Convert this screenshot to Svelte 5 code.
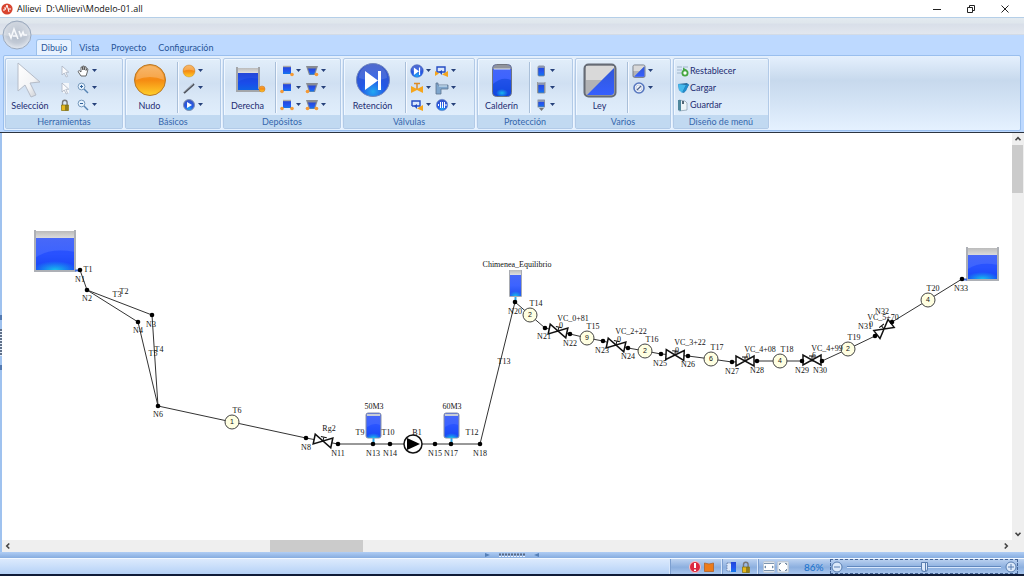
<script>
  const tabs = ['Dibujo', 'Vista', 'Proyecto', 'Configuración'];

  const groups = [
    { title: 'Herramientas', size: 'medium', big: { icon: 'cursor', label: 'Selección' }, plain: true,
      cols: [
        { arrows: false, items: [['cursorSmall', 'Puntero'], ['cursorMulti', 'Selección múltiple'], ['lock', 'Bloquear']] },
        { arrows: true, items: [['hand', 'Mover'], ['zoomIn', 'Ampliar'], ['zoomOut', 'Reducir']] }
      ] },
    { title: 'Básicos', size: 'small', big: { icon: 'ball', label: 'Nudo' },
      cols: [{ arrows: true, items: [['ball', 'Nudo'], ['pipe', 'Tubería'], ['play', 'Bomba']] }] },
    { title: 'Depósitos', size: 'medium', big: { icon: 'tankRight', label: 'Derecha' },
      cols: [
        { arrows: true, items: [['tankR', 'Depósito derecha'], ['tankL', 'Depósito izquierda'], ['tankB', 'Depósito doble']] },
        { arrows: true, items: [['coneR', 'Tolva derecha'], ['coneL', 'Tolva izquierda'], ['coneB', 'Tolva doble']] }
      ] },
    { title: 'Válvulas', size: 'large', big: { icon: 'check', label: 'Retención' },
      cols: [
        { arrows: true, items: [['check', 'Retención'], ['valve', 'Válvula'], ['bypass', 'Baipás']] },
        { arrows: true, items: [['bypass2', 'Baipás doble'], ['elbow', 'Codo'], ['wave', 'Ventosa']] }
      ] },
    { title: 'Protección', size: 'small', big: { icon: 'vessel', label: 'Calderín' },
      cols: [{ arrows: true, items: [['vesselS', 'Calderín'], ['chimney', 'Chimenea'], ['oneway', 'Unidireccional']] }] },
    { title: 'Varios', size: 'small', big: { icon: 'law', label: 'Ley' },
      cols: [{ arrows: true, items: [['law', 'Ley'], ['gauge', 'Medidor']] }] }
  ];

  const menuActions = [['reset', 'Restablecer'], ['load', 'Cargar'], ['save', 'Guardar']];

  const pipes = [
    '80,270 87,290', '87,290 152,315 158,406', '87,290 138,322 158,406',
    '158,406 306,438 338,444 389,444 480,444 515,302', '515,302 530,315 545,328 570,334 587,338 603,341 628,348 645,351 661,354 688,356 711,359 732,362 757,361 802,361 822,361 848,349 875,336 892,322 928,300 962,279'
  ];

  const nodes = [
    ['N1', 80, 270, 80, 279], ['N2', 87, 290, 87, 298], ['N3', 152, 315, 151, 324], ['N4', 138, 322, 138, 330],
    ['N6', 158, 406, 158, 414], ['N8', 306, 438, 306, 447], ['N11', 338, 444, 338, 453], ['N13', 373, 444, 373, 453],
    ['N14', 390, 444, 390, 453], ['N15', 435, 444, 435, 453], ['N17', 451, 444, 451, 453], ['N18', 480, 444, 480, 453],
    ['N20', 515, 302, 515, 311], ['N21', 545, 328, 544, 336], ['N22', 570, 334, 570, 343], ['N23', 603, 341, 602, 350],
    ['N24', 628, 348, 628, 356], ['N25', 661, 354, 660, 363], ['N26', 688, 356, 688, 364], ['N27', 732, 362, 732, 371],
    ['N28', 757, 361, 757, 370], ['N29', 802, 361, 802, 370], ['N30', 822, 361, 820, 370], ['N31', 875, 336, 865, 326],
    ['N32', 892, 322, 882, 311], ['N33', 962, 279, 961, 288]
  ];

  const labels = [
    ['T1', 88, 269], ['T2', 124, 291], ['T3', 117, 294], ['T4', 159, 349], ['T5', 153, 353], ['T6', 237, 410],
    ['Rg2', 329, 428], ['T9', 360, 432], ['T10', 388, 432], ['B1', 417, 432], ['T12', 472, 432],
    ['50M3', 374, 406], ['60M3', 452, 406], ['Chimenea_Equilibrio', 517, 264], ['T13', 504, 361], ['T14', 536, 303],
    ['VC_0+81', 573, 318], ['0', 561, 325], ['T15', 593, 326], ['VC_2+22', 631, 331], ['0', 619, 339], ['T16', 652, 339],
    ['VC_3+22', 690, 342], ['0', 677, 350], ['T17', 717, 347], ['VC_4+08', 760, 349], ['0', 748, 356], ['T18', 787, 349],
    ['VC_4+99', 827, 348], ['6', 814, 355], ['T19', 854, 337], ['VC_5+70', 883, 317], ['0', 871, 324], ['T20', 933, 288]
  ];

  const stations = [
    ['1', 232, 422], ['2', 530, 315], ['9', 587, 338], ['2', 645, 351], ['6', 711, 359], ['4', 780, 361], ['2', 848, 349], ['4', 928, 300]
  ];

  const valves = [
    [323, 441, 12], [558, 331, 12], [616, 345, 12], [675, 355, 3], [745, 361, 0], [812, 360, 0], [884, 329, -38]
  ];

  let zoom = $state(86);
  let active = $state('Dibujo');
</script>

{#snippet icon(name)}
  {#if name === 'cursor'}
    <svg class="pic" viewBox="0 0 36 36"><path d="M6 1v28l7-6 6 12 5-2-6-12 10-1z" fill="url(#gWhite)" stroke="#b5bcc8" /></svg>
  {:else if name === 'cursorSmall' || name === 'cursorMulti'}
    <svg class="pic" viewBox="0 0 14 14">
      {#if name === 'cursorMulti'}<path d="M5 2h6v10H5z" fill="#f3f6fa" />{/if}
      <path d="M4 2v9l2.200-2 2 4 1.400-.6-1.800-4 3-.2z" fill="#fafbfd" stroke="#a9b3c1" stroke-width=".8" />
    </svg>
  {:else if name === 'lock'}
    <svg class="pic" viewBox="0 0 14 14"><path d="M4.500 8V4.500a2.300 2.300 0 0 1 4.600 0V8" fill="none" stroke="#777" stroke-width="1.400" /><path d="M3.500 7h7v5.500h-7z" fill="#e8b81c" stroke="#81710d" stroke-width=".7" /><path d="M7 7h3v5.500H7z" fill="#66611d" opacity=".65" /></svg>
  {:else if name === 'hand'}
    <svg class="pic" viewBox="0 0 14 14"><path d="M5 12 2 7.500l1.200-1L5 8V3.200l1.300-.3.500 3V2l1.400.1V6l.7-3.400 1.300.4-.2 3.500.9-2 1.100.7L11 9l-1 3z" fill="#fff" stroke="#444" stroke-width=".8" /></svg>
  {:else if name === 'zoomIn' || name === 'zoomOut'}
    <svg class="pic" viewBox="0 0 14 14"><path d="m8 8 4 4" stroke="#5784b4" stroke-width="1.500" /><circle cx="5.500" cy="5.500" r="3.400" fill="#e6f2fd" stroke="#7598bc" /><path d="M4 5.500h3" stroke="#31629b" />{#if name === 'zoomIn'}<path d="M5.500 4v3" stroke="#31629b" />{/if}</svg>
  {:else if name === 'ball'}
    <svg class="pic" viewBox="0 0 36 36"><circle cx="18" cy="18" r="15.500" fill="url(#gOrange)" stroke="#b87928" /><path d="M4 18a14 14 0 0 1 28 0q-14-6-28 0" fill="#fff" opacity=".22" /></svg>
  {:else if name === 'pipe'}
    <svg class="pic" viewBox="0 0 14 14"><path d="M2 12 12 3" stroke="#4e535d" stroke-width="2" /><path d="m2 11 9-8" stroke="#bac2ca" stroke-width=".7" /></svg>
  {:else if name === 'play'}
    <svg class="pic" viewBox="0 0 14 14"><circle cx="7" cy="7" r="5.500" fill="url(#gDisc)" stroke="#8191af" /><path d="M5 4v6l5-3z" fill="#fff" /></svg>
  {:else if name === 'tankRight'}
    <svg class="pic" viewBox="0 0 36 36"><path d="M8 6h21v5H8z" fill="url(#gGrey)" /><path d="M8 11h21v17H8z" fill="url(#gWater)" /><path d="M8 20q9-6 21-3v11H8z" fill="#0a38e0" opacity=".35" /><path d="M7 5v24h24" fill="none" stroke="#a3a6aa" stroke-width="2" /><path d="M29 5v22" stroke="#a3a6aa" stroke-width="2" /><circle cx="32" cy="27" r="3" fill="url(#gOrange)" stroke="#cf8330" stroke-width=".6" /></svg>
  {:else if name.startsWith('tank')}
    <svg class="pic" viewBox="0 0 14 14"><path d="M3 3h8v7H3z" fill="url(#gWater)" /><path d="M3 2.500h8" stroke="#aaa" stroke-width="1.400" />
      {#if name !== 'tankL'}<circle cx="12" cy="10.500" r="1.800" fill="#f59a35" />{/if}
      {#if name !== 'tankR'}<circle cx="2" cy="10.500" r="1.800" fill="#f59a35" />{/if}</svg>
  {:else if name.startsWith('cone')}
    <svg class="pic" viewBox="0 0 14 14"><path d="M1 2h12l-3 9H4z" fill="#878b93" /><path d="M3 4.500h8L9 10.500H5z" fill="url(#gWater)" />
      {#if name !== 'coneL'}<circle cx="11.500" cy="10.500" r="1.800" fill="#f59a35" />{/if}
      {#if name !== 'coneR'}<circle cx="2.500" cy="10.500" r="1.800" fill="#f59a35" />{/if}</svg>
  {:else if name === 'check'}
    <svg class="pic" viewBox="0 0 36 36"><circle cx="18" cy="18" r="16.500" fill="url(#gDisc)" stroke="#7188bf" /><path d="M4 16a14 14 0 0 1 28 0q-14 5-28 0" fill="#fff" opacity=".12" /><path d="M10 9v19l13-9.500zM23 9h3v19h-3z" fill="#fff" /></svg>
  {:else if name === 'valve'}
    <svg class="pic" viewBox="0 0 14 14"><path d="M1 5v7l6-3 6 3V5L7 8z" fill="#f5a51c" /><path d="M7 8V3M4 2.500h6" stroke="#dd8b23" stroke-width="1.500" /></svg>
  {:else if name === 'bypass' || name === 'bypass2'}
    <svg class="pic" viewBox="0 0 14 14"><path d="M2 8V3h8v5H2" fill="#dce8fb" stroke="#244cc3" stroke-width="1.400" /><path d="M4 8 7 11V6z" fill="#244cc3" /><path d="M7 10.500 13 7v6z" fill="#f5a51c" />{#if name === 'bypass2'}<path d="M0 7v5l4-2.500z" fill="#f5a51c" />{/if}</svg>
  {:else if name === 'elbow'}
    <svg class="pic" viewBox="0 0 14 14"><path d="M1 2h2v2h10v4H6v5H1z" fill="#7fa6cc" stroke="#5d7490" stroke-width=".8" /><path d="M4 5h8" stroke="#dcecf7" /></svg>
  {:else if name === 'wave'}
    <svg class="pic" viewBox="0 0 14 14"><circle cx="7" cy="7" r="5.700" fill="url(#gDisc)" stroke="#718bc4" stroke-width=".6" /><path d="M3.500 6v2M5.500 4v6M7.500 4v6M9.500 4v6M11 6v2" stroke="#fff" /></svg>
  {:else if name === 'vessel'}
    <svg class="pic" viewBox="0 0 36 36"><rect x="8.500" y="2.500" width="19" height="32" rx="4" fill="url(#gTank)" stroke="#70757f" /><path d="M9 7q0-4 4-4h10q4 0 4 4z" fill="#90949c" /><path d="M10 7h16" stroke="#dce2ec" /><path d="M9 22q9-8 18-4v12q0 4-4 4H13q-4 0-4-4z" fill="#003ccd" opacity=".45" /><ellipse cx="18" cy="31" rx="6" ry="4" fill="url(#gGlow)" /></svg>
  {:else if name === 'vesselS' || name === 'chimney' || name === 'oneway'}
    <svg class="pic" viewBox="0 0 14 14"><rect x="4" y="2" width="6.500" height={name === 'oneway' ? 7 : 10} rx={name === 'vesselS' ? 1 : 0} fill="url(#gWater)" stroke="#777f8f" stroke-width=".8" /><path d="M4 3h6.500" stroke="#a5a8ad" stroke-width="1.500" />
      {#if name === 'chimney'}<path d="M3.500 1v11M11 1v11" stroke="#999" />{/if}
      {#if name === 'oneway'}<path d="M5 10h5l-2.500 3z" fill="#777" />{/if}</svg>
  {:else if name === 'law'}
    <svg class="pic" viewBox="0 0 36 36"><rect x="2.500" y="2.500" width="31" height="32" rx="4" fill="#b2b3b5" stroke="#656b75" stroke-width="2" /><path d="M4 4h28v3L20 18H4z" fill="#e6e6e6" opacity=".75" /><path d="M32 6v24q0 3-3 3H5z" fill="url(#gLaw)" /></svg>
  {:else if name === 'gauge'}
    <svg class="pic" viewBox="0 0 14 14"><circle cx="7" cy="7" r="5" fill="#f1f5fb" stroke="#5777bf" stroke-width="1.600" /><path d="m5 9 4-4" stroke="#50648d" stroke-width="1.300" /><circle cx="7" cy="7" r="3" fill="none" stroke="#a4b4d2" stroke-width=".6" /></svg>
  {:else if name === 'reset'}
    <svg class="pic" viewBox="0 0 14 14"><path d="M1 3h5M7 3h5M1 6h5M1 9h5" stroke="#9fb5cc" stroke-width="1.200" /><circle cx="9" cy="9" r="2.600" fill="#fff" stroke="#45a642" stroke-width="1.800" /><path d="M7 3.500 11 6H7z" fill="#45a642" /></svg>
  {:else if name === 'load'}
    <svg class="pic" viewBox="0 0 14 14"><path d="M2 3 11 2l2 2-5 8-5-3z" fill="#266b9e" /><path d="m2 3 8 1-4 8-3-3z" fill="#45b8ec" /><path d="m10 4 3-1-3 7-4 2z" fill="#218ccd" /></svg>
  {:else if name === 'save'}
    <svg class="pic" viewBox="0 0 14 14"><path d="m3 2 6 1 2 2v7l-8 1z" fill="#edf5f8" stroke="#8298a9" stroke-width=".7" /><path d="M2 2h3v11l-3-1z" fill="#4e879d" /><path d="M6 3h2v3H6z" fill="#526777" /></svg>
  {:else if name === 'error'}
    <svg class="pic" viewBox="0 0 14 14"><circle cx="7" cy="7" r="5.500" fill="#dc2840" stroke="#f6c6c8" /><path d="M7 3v5M7 9.500v1.500" stroke="#fff" stroke-width="2" /></svg>
  {:else if name === 'box'}
    <svg class="pic" viewBox="0 0 14 14"><path d="M2.500 3q4.500 2 9 0v8.500h-9z" fill="#ed7b1a" stroke="#b36124" stroke-width=".8" /></svg>
  {:else if name === 'copy'}
    <svg class="pic" viewBox="0 0 14 14"><path d="M2 3h5v8H2z" fill="#dfeafa" stroke="#536c96" stroke-width=".7" stroke-dasharray="1.500 1" /><path d="M6 2h5v10H6z" fill="url(#gWater)" /></svg>
  {:else if name === 'fitWidth' || name === 'fitAll'}
    <svg class="pic" viewBox="0 0 14 14"><rect x="1.500" y="1.500" width="11" height="11" rx="1" fill="#dce4ec" stroke="#bec9d6" />
      {#if name === 'fitWidth'}<path d="M2 4h10v6H2z" fill="#fff" /><path d="m2 7 2-1.500v3zM12 7l-2-1.500v3z" fill="#6a87a6" /><path d="M2 3.500h10M2 10.500h10" stroke="#7c95b0" />
      {:else}<path d="M3 3h8v8H3z" fill="#fff" /><path d="M3.500 5V3.500H5M9 3.500h1.500V5M10.500 9v1.500H9M5 10.500H3.500V9" fill="none" stroke="#7288a2" />{/if}</svg>
  {/if}
{/snippet}

{#snippet tank(x, y, w, h)}
  <g transform="translate({x} {y})">
    <rect x="2" y="1" width={w - 4} height="8" fill="url(#gGrey)" />
    <rect x="2" y="8" width={w - 4} height={h - 9} fill="url(#gTank)" />
    <path d="M2 {h * 0.65} Q{w * 0.4} {h * 0.42} {w - 2} {h * 0.52} V{h - 1} H2z" fill="#0a38ff" opacity=".4" />
    <rect x="2" y={h * 0.6} width={w - 4} height={h * 0.4 - 2} fill="url(#gFloor)" />
    <path d="M1 0v{h - 1}h{w - 2}v-{h - 1}" fill="none" stroke="#adb0b6" stroke-width="2" />
  </g>
{/snippet}

<svg class="defs" width="0" height="0" aria-hidden="true">
  <defs>
    <linearGradient id="gWhite" x2="1" y2="1"><stop stop-color="#fff" /><stop offset=".6" stop-color="#f3f4f6" /><stop offset="1" stop-color="#c3c7cd" /></linearGradient>
    <linearGradient id="gOrange" x2="0" y2="1"><stop stop-color="#f4a546" /><stop offset=".5" stop-color="#f58a12" /><stop offset="1" stop-color="#ffd02a" /></linearGradient>
    <linearGradient id="gGrey" x2="0" y2="1"><stop stop-color="#bbb" /><stop offset="1" stop-color="#e0e0e0" /></linearGradient>
    <linearGradient id="gWater" x2="0" y2="1"><stop stop-color="#2446d8" /><stop offset=".6" stop-color="#2457f0" /><stop offset="1" stop-color="#1379ea" /></linearGradient>
    <linearGradient id="gTank" x2="0" y2="1"><stop stop-color="#4868f8" /><stop offset=".5" stop-color="#3c63ff" /><stop offset="1" stop-color="#1e4eef" /></linearGradient>
    <linearGradient id="gLaw" x2="0" y2="1"><stop stop-color="#3158d8" /><stop offset="1" stop-color="#355fff" /></linearGradient>
    <radialGradient id="gDisc" cx=".5" cy=".85" r=".8"><stop stop-color="#22a8f2" /><stop offset=".45" stop-color="#2458e6" /><stop offset="1" stop-color="#3555c8" /></radialGradient>
    <radialGradient id="gGlow"><stop stop-color="#18b8ee" /><stop offset="1" stop-color="#18b8ee" stop-opacity="0" /></radialGradient>
    <radialGradient id="gFloor" cx=".5" cy="1" r=".6"><stop stop-color="#18c0ec" /><stop offset="1" stop-color="#18b8ee" stop-opacity="0" /></radialGradient>
    <radialGradient id="gOrb" cx=".5" cy=".4" r=".65"><stop stop-color="#a9b4c4" /><stop offset=".6" stop-color="#c2cad6" /><stop offset="1" stop-color="#edf1f7" /></radialGradient>
  </defs>
</svg>

<div class="window">
  <header class="titlebar">
    <svg class="logo" viewBox="0 0 12 12"><circle cx="6" cy="6" r="5.600" fill="#d84530" /><path d="M2 7h2l2-5 2 7M3 5h1M7 6h3" fill="none" stroke="#fff" /></svg>
    <h1>Allievi  D:\Allievi\Modelo-01.all</h1>
    <div class="winbtns">
      <button aria-label="Minimizar"><svg viewBox="0 0 10 10"><path d="M1 5.500h8" /></svg></button>
      <button aria-label="Restaurar"><svg viewBox="0 0 10 10"><path d="M1.500 3.500h5v5h-5zM3.500 3V1.500h5v5H7" /></svg></button>
      <button aria-label="Cerrar"><svg viewBox="0 0 10 10"><path d="m1.500 1.500 7 7m0-7-7 7" /></svg></button>
    </div>
  </header>

  <div class="quick">
    <button class="orb" aria-label="Menú principal">
      <svg viewBox="0 0 30 30"><circle cx="15" cy="15" r="14" fill="url(#gOrb)" stroke="#9aa9bd" /><path d="M2 15a13 13 0 0 1 26 0q-13 4-26 0" fill="#fff" opacity=".25" /><path d="M7 13l2 5 3-9 4 10M11 16h4M17 11l2 5 2-4 1 3h3" fill="none" stroke="#f6f8fb" stroke-width="1.600" /></svg>
    </button>
  </div>

  <nav class="tabs">
    {#each tabs as tab}
      <button class:active={active === tab} onclick={() => (active = tab)}>{tab}</button>
    {/each}
  </nav>

  <div class="ribbon">
    {#each groups as group}
      <section class="group {group.size}">
        <div class="tools">
          <button class="big" class:plain={group.plain}>{@render icon(group.big.icon)}<span>{group.big.label}</span></button>
          {#each group.cols as col}
            <div class="col">
              {#each col.items as [name, label]}
                <button class="mini" aria-label={label}>{@render icon(name)}{#if col.arrows}<i class="caret"></i>{/if}</button>
              {/each}
            </div>
          {/each}
        </div>
        <h2>{group.title}</h2>
      </section>
    {/each}
    <section class="group small">
      <div class="tools">
        <div class="col actions">
          {#each menuActions as [name, label]}
            <button class="mini">{@render icon(name)}<span>{label}</span></button>
          {/each}
        </div>
      </div>
      <h2>Diseño de menú</h2>
    </section>
  </div>

  <main class="work">
    <div class="rail"><i class="stub"></i><i class="grip"></i><i class="stub"></i></div>
    <div class="view">
      <svg class="diagram" role="img" aria-label="Modelo de la conducción">
        <g transform="translate(-2 -133)">
          {@render tank(34, 230, 42, 42)}
          {@render tank(966, 247, 33, 34)}
          <path d="M75 270.500h5M962 279.500h5" stroke="#3c6be0" stroke-width="2" />
          {#each [373, 451] as x}
            <path d="M{x + 0.5} 436v8" stroke="#30a8e8" stroke-width="2" />
            <rect x={x - 7} y="413" width="15" height="25" rx="2" fill="url(#gTank)" stroke="#8c93a5" />
            <path d="M{x - 6} 414h13v2h-13z" fill="#c9ced6" />
            <path d="M{x - 6} 427q7-5 13-2v12h-13z" fill="#0a38ff" opacity=".35" />
            <rect x={x - 6} y="430" width="13" height="8" fill="url(#gFloor)" />
          {/each}
          <path d="M515.500 296v6" stroke="#30a8e8" stroke-width="2" />
          <path d="M510 270h11v5h-11z" fill="url(#gGrey)" />
          <path d="M510 275h11v21h-11z" fill="url(#gTank)" />
          <rect x="510" y="288" width="11" height="8" fill="url(#gFloor)" />
          <path d="M509.500 270v26.500h12V270" fill="none" stroke="#a8abb1" />

          {#each pipes as points}<polyline {points} class="pipe" />{/each}
          {#each valves as [x, y, angle]}
            <g transform="translate({x} {y}) rotate({angle})">
              <path d="M-9-5v10L9-5V5z" class="valve" />
              <path d="M0 0v-4M-3-4h6" class="stem" />
            </g>
          {/each}
          <circle cx="413" cy="444" r="9" class="pump" />
          <path d="M407 438v12l13-6z" />
          {#each stations as [text, x, y]}
            <circle cx={x} cy={y} r="7" class="station" />
            <text {x} y={y + 2} class="count">{text}</text>
          {/each}
          {#each nodes as [text, x, y, lx, ly]}
            <circle cx={x} cy={y} r="2.300" />
            <text x={lx} y={ly + 3}>{text}</text>
          {/each}
          {#each labels as [text, x, y]}<text {x} y={y + 3}>{text}</text>{/each}
        </g>
      </svg>
      <div class="hbar">
        <button aria-label="Izquierda"><svg viewBox="0 0 8 8"><path d="M5 2 3 4l2 2" /></svg></button>
        <div class="track"><div class="thumb"></div></div>
        <button aria-label="Derecha"><svg viewBox="0 0 8 8"><path d="m3 2 2 2-2 2" /></svg></button>
      </div>
    </div>
    <div class="vbar">
      <button aria-label="Arriba"><svg viewBox="0 0 8 8"><path d="m2 5 2-2 2 2" /></svg></button>
      <div class="track"><div class="thumb"></div></div>
      <button aria-label="Abajo"><svg viewBox="0 0 8 8"><path d="m2 3 2 2 2-2" /></svg></button>
    </div>
  </main>

  <div class="splitter">
    <svg width="54" height="6" viewBox="0 0 54 6"><path d="m0 1 5 2-5 2zM54 1l-5 2 5 2z" fill="#5580b8" /><path d="M14 2.500h27" stroke="#596984" stroke-width="2" stroke-dasharray="2 1" /><path d="M14 4.500h27" stroke="#e8f1ff" stroke-dasharray="2 1" /></svg>
  </div>

  <footer class="status">
    <div class="message"></div>
    <div class="panel first"><button aria-label="Errores">{@render icon('error')}</button><button aria-label="Resultados">{@render icon('box')}</button></div>
    <div class="panel"><button aria-label="Copiar">{@render icon('copy')}</button><button aria-label="Bloquear">{@render icon('lock')}</button></div>
    <div class="panel last">
      <button aria-label="Ajustar ancho">{@render icon('fitWidth')}</button><button aria-label="Ajustar todo">{@render icon('fitAll')}</button>
      <output for="zoom">{zoom}%</output>
      <div class="zoom">
        <button aria-label="Reducir" onclick={() => (zoom -= 1)}><svg viewBox="0 0 12 12"><circle cx="6" cy="6" r="5" /><path d="M3 6h6" /></svg></button>
        <input id="zoom" type="range" min="0" max="172" bind:value={zoom} aria-label="Zoom" />
        <button aria-label="Ampliar" onclick={() => (zoom += 1)}><svg viewBox="0 0 12 12"><circle cx="6" cy="6" r="5" /><path d="M3 6h6M6 3v6" /></svg></button>
      </div>
    </div>
  </footer>
</div>

<style>
  :global(body) { margin: 0; }
  .defs { position: absolute; }
  .window {
    display: flex; flex-direction: column; height: 100vh; box-sizing: border-box; overflow: hidden;
    font: 9px/12px Lato, "Open Sans", sans-serif; color: #1d2c72; background: #bdd9ff;
    border-bottom: 2px solid #101c38;
  }
  button { border: 0; padding: 0; margin: 0; background: none; font: inherit; color: inherit; display: flex; align-items: center; }
  .pic { display: block; width: 14px; height: 14px; flex: none; }

  .titlebar { display: flex; align-items: center; height: 17px; background: #fff; color: #111; padding-left: 1px; flex: none; }
  .logo { width: 12px; height: 12px; }
  .titlebar h1 { margin: 0 auto 0 4px; font: 9px/12px "Open Sans", sans-serif; white-space: pre; }
  .winbtns { display: flex; padding-right: 2px; }
  .winbtns button { width: 34px; height: 17px; justify-content: center; }
  .winbtns svg { width: 10px; height: 10px; fill: none; stroke: #222; }

  .quick { height: 18px; flex: none; position: relative; box-sizing: border-box; border-top: 1px solid #b5cfe8; border-bottom: 1px solid #d3dbe6; background: linear-gradient(#e3eaf0, #dfe6ec 30%, #d9dfe9 40%, #e2e7ee); }
  .orb { position: absolute; left: 2px; top: 2px; z-index: 1; }
  .orb svg { width: 30px; height: 30px; display: block; }

  .tabs { display: flex; gap: 2px; height: 20px; flex: none; padding: 4px 0 0 36px; box-sizing: border-box; color: #285599; }
  .tabs button { height: 16px; padding: 0 4px; border: 1px solid transparent; border-bottom: 0; box-sizing: border-box; border-radius: 3px 3px 0 0; }
  .tabs .active { background: #e8f2ff; border-color: #9cc0ea; }

  .ribbon { display: flex; gap: 2px; margin: 0 3px 1px; padding: 2px 1px 1px; flex: none; border: 1px solid #9abfee; border-radius: 2px; background: linear-gradient(#e5f0fd, #c7d9ed 33%, #d2e2f4 60%, #e5f1ff); }
  .group { box-sizing: border-box; display: flex; flex-direction: column; border: 1px solid #b2cae7; border-radius: 2px; box-shadow: inset 1px 1px #f0f7ff, 1px 0 #edf5ff; background: linear-gradient(#e2eefa, #d0e0f2 35%, #dbe9f8 60%, #e5f2ff); }
  .small { min-width: 96px; }
  .medium { min-width: 118px; }
  .large { min-width: 132px; }
  .tools { display: flex; gap: 4px; padding: 3px 0 2px; min-height: 51px; }
  .big { flex-direction: column; justify-content: space-between; min-width: 52px; padding: 0 4px 1px 0; box-sizing: border-box; border-right: 1px solid #a9bfd9; box-shadow: 1px 0 #f5f9ff; }
  .large .big { min-width: 62px; }
  .big .pic { width: 36px; height: 36px; }
  .big.plain { border-right: 0; box-shadow: none; min-width: 48px; padding-right: 0; }
  .col { display: flex; flex-direction: column; }
  .mini { height: 17px; gap: 2px; }
  .caret { width: 5px; height: 3px; background: #26417a; clip-path: polygon(0 0, 100% 0, 50% 100%); }
  .actions { padding-left: 2px; }
  .actions .mini { gap: 0; }
  h2 { margin: auto 0 0; font-size: 9px; line-height: 13px; font-weight: 400; text-align: center; color: #3567ad; background: #c1d9f1; }

  .work { display: flex; flex: 1; min-height: 0; border-top: 1px solid #2c3440; background: #fff; }
  .rail { width: 2px; background: #9fc2ef; display: flex; flex-direction: column; align-items: center; justify-content: center; gap: 9px; }
  .stub { width: 2px; height: 5px; background: #527ab2; }
  .grip { width: 2px; height: 27px; background: repeating-linear-gradient(#5f7089 0 2px, #e3eefc 2px 3px); }
  .view { flex: 1; min-width: 0; display: flex; flex-direction: column; }
  .diagram { flex: 1; min-height: 0; width: 100%; display: block; }
  .diagram text { font: 8px "Liberation Serif", serif; text-anchor: middle; fill: #111; }
  .diagram .count { font: 7px "Liberation Sans", sans-serif; }
  .pipe { fill: none; stroke: #333; stroke-width: 1px; }
  .valve { fill: #fff; stroke: #111; stroke-width: 1.500px; }
  .stem { fill: none; stroke: #111; }
  .pump { fill: #fff; stroke: #111; stroke-width: 1.500px; }
  .station { fill: #ffffe1; stroke: #444; }

  .hbar, .vbar { display: flex; background: #efefef; flex: none; }
  .hbar { height: 12px; }
  .vbar { width: 12px; flex-direction: column; padding-bottom: 12px; }
  .hbar button, .vbar button { width: 12px; height: 12px; justify-content: center; }
  .hbar svg, .vbar svg { width: 10px; height: 10px; fill: none; stroke: #444; stroke-width: 1.300; }
  .track { flex: 1; display: flex; }
  .vbar .track { flex-direction: column; }
  .thumb { background: #cbcbcb; }
  .hbar .thumb { width: 9.400%; margin-left: 26%; }
  .vbar .thumb { width: 11px; height: 12.600%; }

  .splitter { height: 6px; flex: none; display: flex; justify-content: center; background: linear-gradient(#b0cdf4, #86acdf); }
  .status { height: 16px; flex: none; display: flex; border-top: 1px solid #f2f8ff; box-sizing: border-box; background: linear-gradient(#bdd3f1, #8cafdf 55%, #a8c6ee); }
  .message { flex: 1; background: linear-gradient(#dceafd, #c9defa 50%, #b5d1f6); }
  .panel { display: flex; align-items: center; padding: 0 4px 0 3px; border-left: 1px solid #d8e7fb; box-shadow: inset 1px 0 #7c9fd0; }
  .panel.first { padding: 0 5px 0 18px; }
  .panel.last { padding: 0 6px 0 4px; }
  .panel output { color: #1570cc; font-size: 10px; width: 20px; margin: 0 6px 0 14px; }
  .zoom { display: flex; align-items: center; gap: 4px; height: 15px; box-sizing: border-box; border: 1px dashed #446497; width: 188px; }
  .zoom svg { width: 12px; height: 12px; display: block; fill: #dce9fa; stroke: #587db0; }
  .zoom input { flex: 1; min-width: 0; margin: 0; height: 12px; appearance: none; background: linear-gradient(transparent 5px, #6288be 5px 6px, #d8e7fc 6px 7px, transparent 7px); }
  .zoom input::-webkit-slider-thumb { appearance: none; width: 7px; height: 10px; background: linear-gradient(90deg, transparent 3px, #587db0 3px 4px, transparent 4px), #dce9fb; border: 1px solid #587db0; border-radius: 1px 1px 4px 4px; }
</style>
